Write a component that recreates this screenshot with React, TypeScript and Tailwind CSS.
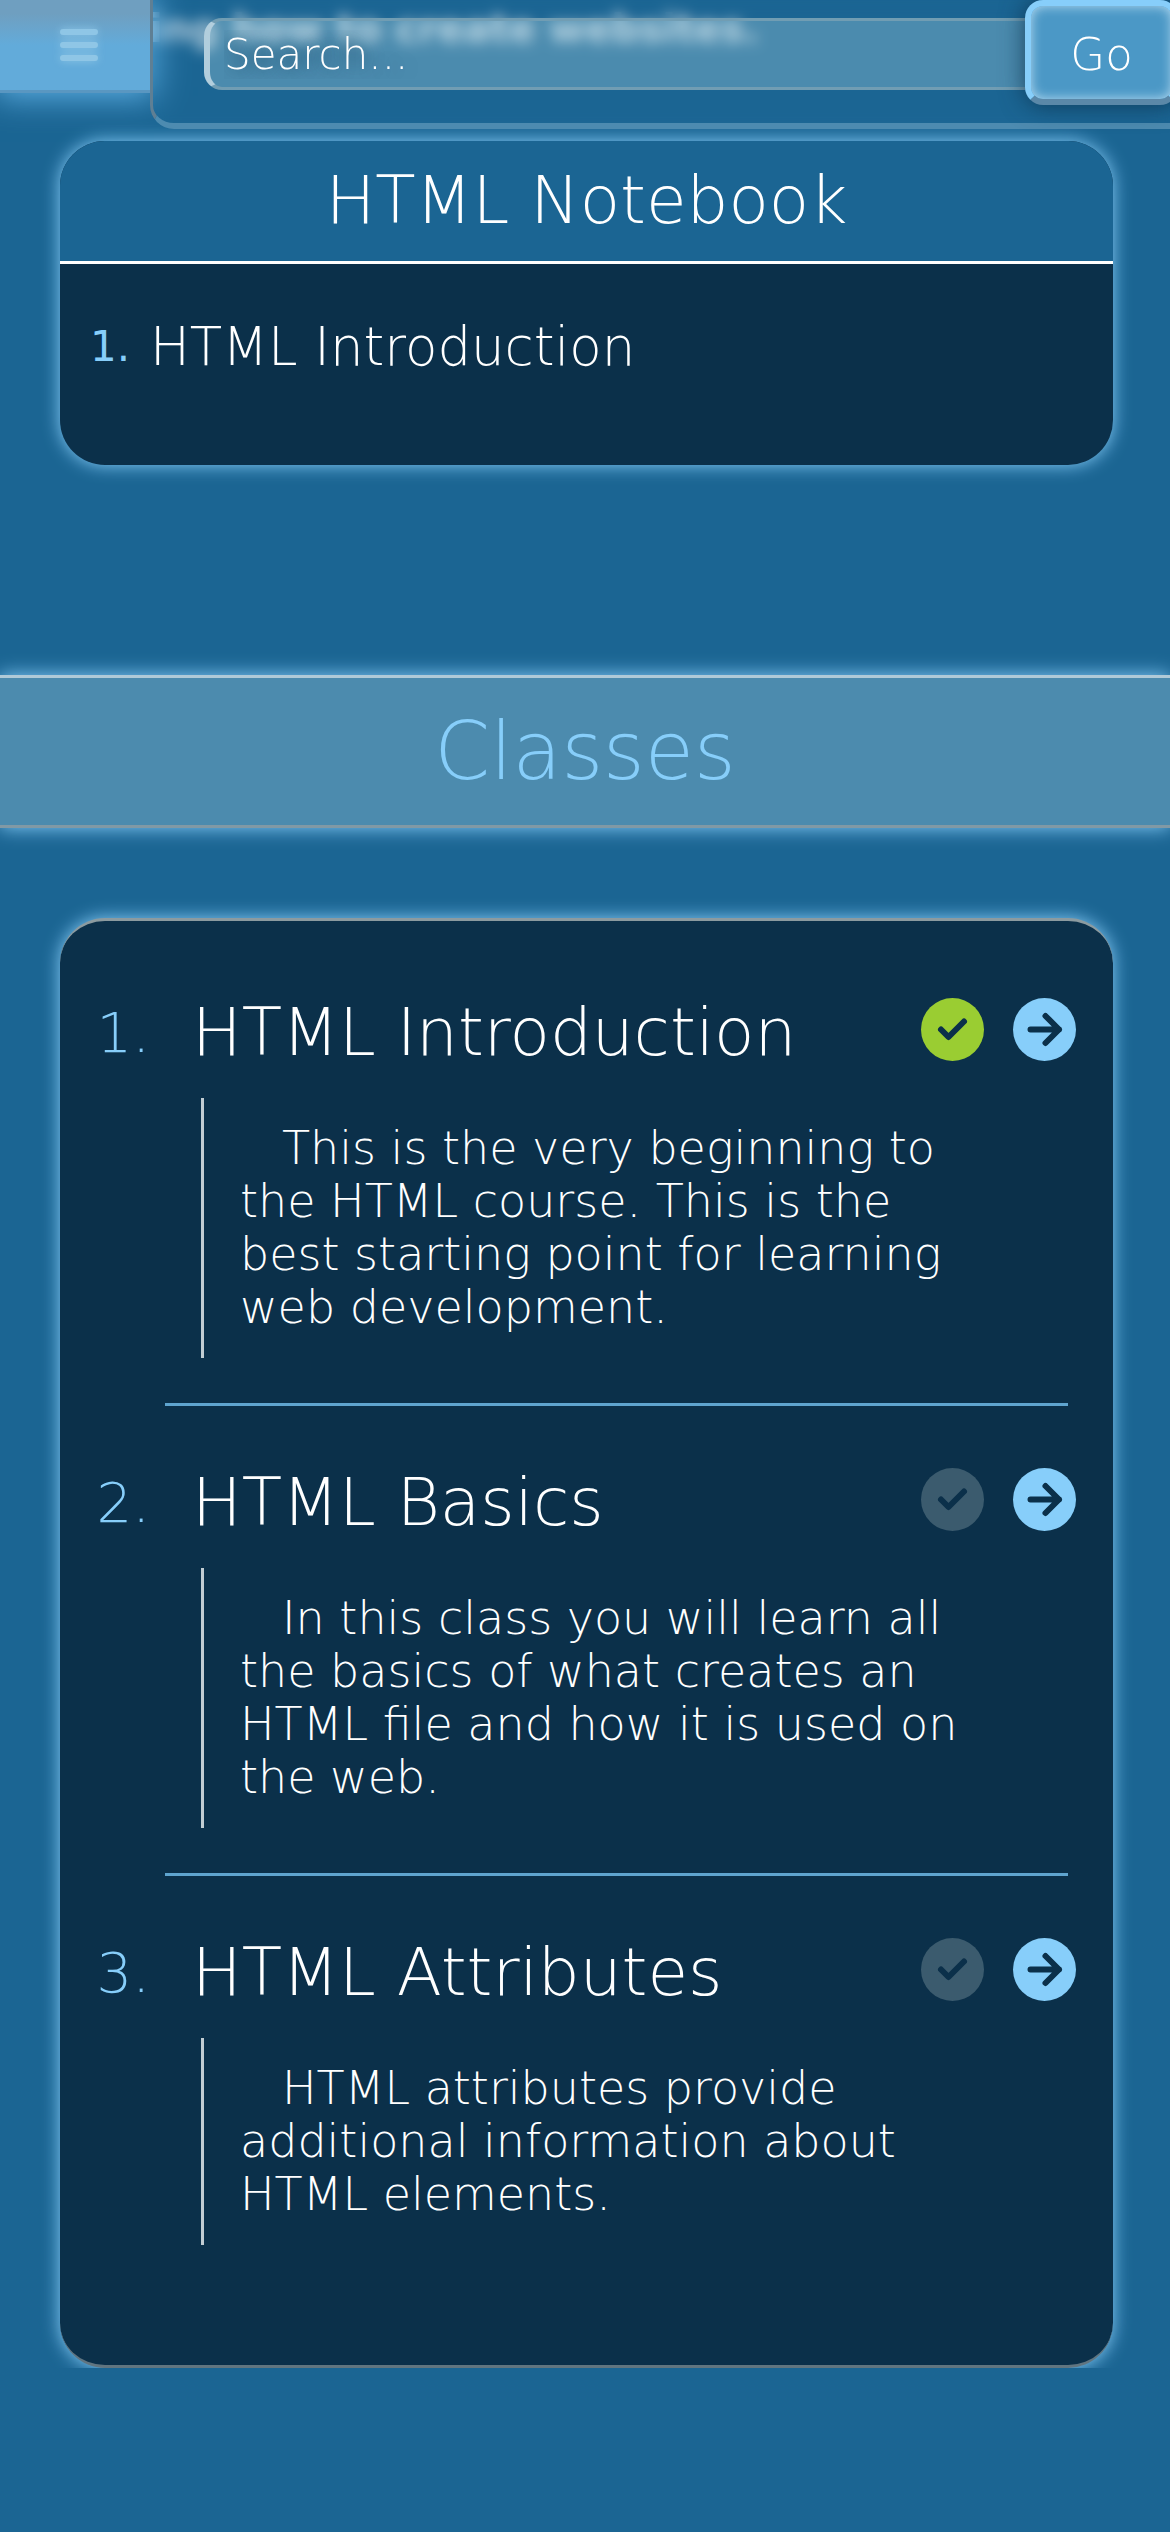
import React from "react";

type Lesson = { title: string; text: string; done: boolean };

const lessons: Lesson[] = [
  {
    title: "HTML Introduction",
    text: "This is the very beginning to the HTML course. This is the best starting point for learning web development.",
    done: true,
  },
  {
    title: "HTML Basics",
    text: "In this class you will learn all the basics of what creates an HTML file and how it is used on the web.",
    done: false,
  },
  {
    title: "HTML Attributes",
    text: "HTML attributes provide additional information about HTML elements.",
    done: false,
  },
];

function CheckIcon() {
  return (
    <svg viewBox="0 0 63 63" className="block size-full" fill="none" stroke="#0b304a" strokeWidth="6" strokeLinecap="round" strokeLinejoin="round" aria-hidden="true">
      <path d="M20 31.5l7.5 7.5L43 23.5" />
    </svg>
  );
}

function ArrowIcon() {
  return (
    <svg viewBox="0 0 63 63" className="block size-full" fill="none" stroke="#0b304a" strokeWidth="6" strokeLinecap="round" strokeLinejoin="round" aria-hidden="true">
      <path d="M17.5 31.5H46M32.5 18L46 31.5L32.5 45" />
    </svg>
  );
}

function TopBar() {
  return (
    <header className="fixed inset-x-0 top-0 z-10 flex items-start overflow-hidden pb-10">
      <button
        type="button"
        aria-label="Open menu"
        className="relative flex h-[93px] w-[150px] shrink-0 items-center justify-center border-b-3 border-[#5a97c1] bg-linear-to-b from-[#6f9fc0] from-15% to-[#62abda] to-50% pl-2 shadow-[0_0_30px_4px_#5fb0e4]"
      >
        <svg viewBox="0 0 38 32" className="h-8 w-[38px] drop-shadow-[0_0_4px_#8fc6e6]" stroke="#8fc6e6" strokeWidth="6" strokeLinecap="round" aria-hidden="true">
          <path d="M3 3h32M3 16h32M3 29h32" />
        </svg>
      </button>
      <form
        className="-mr-2 flex h-[129px] flex-1 items-start rounded-bl-[24px] border-b-6 border-l-3 border-b-[#4d8bb0] border-l-[#5f7f94] pl-[51px] backdrop-blur-[7px]"
        onSubmit={(e) => e.preventDefault()}
      >
        <input
          type="search"
          aria-label="Search"
          placeholder="Search..."
          className="mt-[18px] -mr-5 h-[72px] min-w-0 flex-1 rounded-l-[18px] border-y-3 border-l-6 border-y-[#719db3] border-l-[#b2cedd] bg-[#bee4ed]/30 pl-[14px] text-[42px] text-white outline-none placeholder:text-white placeholder:opacity-100 [text-shadow:0_0_18px_#0b304a]"
        />
        <button
          type="submit"
          className="relative h-[105px] w-[153px] rounded-[18px] border-6 border-[#87cefa] border-b-[#5b88a8] bg-[#4b98c6] pt-1 text-[45px] shadow-[0_0_24px_#0b304acc,inset_0_0_12px_#b8dcf2]"
        >
          Go
        </button>
      </form>
    </header>
  );
}

function LessonItem({ lesson, index, last }: { lesson: Lesson; index: number; last: boolean }) {
  return (
    <li>
      <div className="mt-[62px] mb-[37px] flex h-[63px] items-center pr-[37px]">
        <span className="w-[90px] pt-1.5 text-right text-[56px] leading-[63px] text-[#87cefa]">{index + 1}.</span>
        <h3 className="ml-[42px] flex-1 pt-1.5 text-[66px] leading-[63px] whitespace-nowrap">{lesson.title}</h3>
        <button
          type="button"
          aria-label={lesson.done ? "Completed" : "Mark as completed"}
          className={
            lesson.done
              ? "size-[63px] shrink-0 rounded-full bg-[#9acd32]"
              : "size-[63px] shrink-0 rounded-full bg-[#3b5b6e]"
          }
        >
          <CheckIcon />
        </button>
        <a href="#class" aria-label={`Open ${lesson.title}`} className="ml-[29px] size-[63px] shrink-0 rounded-full bg-[#87cefa]">
          <ArrowIcon />
        </a>
      </div>
      <p className="mr-[120px] ml-[141px] border-l-3 border-[#c2cdd3] py-6 pr-4 pl-9 indent-[42px] text-[46px] leading-[53px]">
        {lesson.text}
      </p>
      {!last && <hr className="mt-[45px] mr-[45px] ml-[105px] border-t-3 border-[#5fa4cf]" />}
    </li>
  );
}

export default function App() {
  return (
    <div className="min-h-screen bg-[#1b6593] font-['DejaVu_Sans_Light','DejaVu_Sans',sans-serif] font-extralight text-white">
      <TopBar />
      <main className="pb-[165px]">
        <p className="h-[141px] pl-9 font-['DejaVu_Sans',sans-serif] text-[39px] leading-[58px] font-bold whitespace-nowrap text-white/70">
          learning how to create websites.
        </p>

        <section className="mr-[57px] ml-[60px] overflow-hidden rounded-[45px] bg-[#0b304a] shadow-[0_0_18px_#87cefa]">
          <h2 className="border-b-3 border-white bg-[#1b6593] text-center text-[66px] leading-[120px]">HTML Notebook</h2>
          <ol className="pt-[53px] pb-[88px] text-[53px] leading-[60px]">
            <li className="flex">
              <span className="w-[90px] pl-[30px] font-['DejaVu_Sans',sans-serif] text-[42px] font-normal text-[#87cefa]">1.</span>
              <a href="#notebook">HTML Introduction</a>
            </li>
          </ol>
        </section>

        <h1 className="mt-[210px] border-y-3 border-t-[#b0cad8] border-b-[#8199a5] bg-[#4c8bae] text-center text-[80px] leading-[147px] text-[#87cefa] shadow-[0_0_18px_#87cefa]">
          Classes
        </h1>

        <div className="overflow-hidden pt-[90px]">
          <ol className="mr-[57px] ml-[60px] rounded-[45px] border-y-3 border-t-[#8c9ba0] border-b-[#617580] bg-[#0b304a] pt-[15px] pb-[120px] shadow-[0_0_18px_#87cefa]">
            {lessons.map((lesson, i) => (
              <LessonItem key={lesson.title} lesson={lesson} index={i} last={i === lessons.length - 1} />
            ))}
          </ol>
        </div>
      </main>
    </div>
  );
}
